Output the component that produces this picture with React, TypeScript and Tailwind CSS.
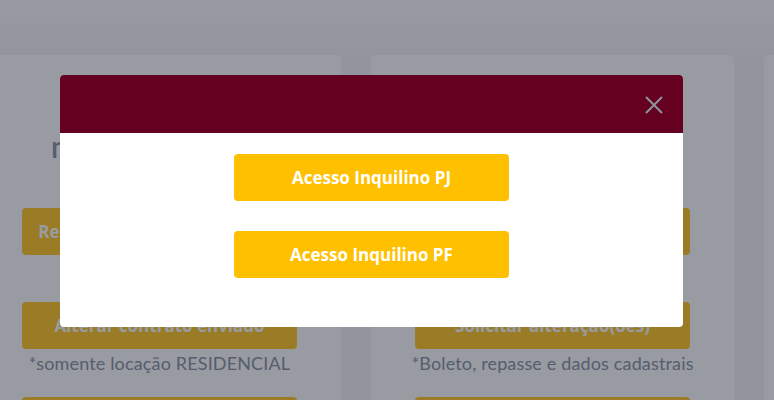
type Card = {
  title: string
  actions: { label: string; note?: string }[]
}

const CARDS: Card[] = [
  {
    title: 'minha locação',
    actions: [
      { label: 'Renovar contrato de locação' },
      { label: 'Alterar contrato enviado', note: '*somente locação RESIDENCIAL' },
      { label: 'Enviar documentos' },
    ],
  },
  {
    title: 'meus dados',
    actions: [
      { label: 'Segunda via de boleto' },
      { label: 'Solicitar alteração(ões)', note: '*Boleto, repasse e dados cadastrais' },
      { label: 'Falar com atendimento' },
    ],
  },
  {
    title: '',
    actions: [],
  },
]

function PageCard({ card }: { card: Card }) {
  return (
    <div className="h-[400px] w-[363px] shrink-0 rounded-md bg-white px-[44px] pt-[73px]">
      <h2 className="h-[36px] whitespace-nowrap pl-[29px] text-[30px] font-semibold leading-[36px] text-[#8f99a6]">
        {card.title}
      </h2>
      <div className="mt-[44px] flex flex-col">
        {card.actions.map((a) => (
          <div key={a.label} className="mb-[47px] flex flex-col items-center">
            <button className="h-[47px] w-[275px] rounded-[4px] bg-[#ffcb2f] font-['Open_Sans',sans-serif] text-[17px] font-bold text-white">
              {a.label}
            </button>
            {a.note && (
              <p className="-mb-[26px] mt-[1px] whitespace-nowrap text-[18px] leading-[26px] tracking-[0.15px] text-[#8f99a6]">
                {a.note}
              </p>
            )}
          </div>
        ))}
      </div>
    </div>
  )
}

export default function App() {
  return (
    <div className="relative h-[400px] w-[774px] overflow-hidden bg-[#f5f6f9] font-['Lato',sans-serif]">
      {/* page behind the modal */}
      <div className="h-[55px] bg-gradient-to-b from-white to-[#f5f6f9]" />
      <div className="-ml-[22px] flex gap-[30px]">
        {CARDS.map((c, i) => (
          <PageCard key={i} card={c} />
        ))}
      </div>

      {/* backdrop */}
      <div className="absolute inset-0 bg-[rgba(0,6,22,0.4)]" />

      {/* modal */}
      <div className="absolute left-[60px] top-[75px] w-[623px] overflow-hidden rounded-[4px] bg-white">
        <div className="flex h-[58px] items-center justify-end bg-[#660020] pr-[20px]">
          <svg width="18" height="18" viewBox="0 0 18 18" className="mt-[1px]">
            <path d="M1 1L17 17M17 1L1 17" stroke="#8c939b" strokeWidth="2" />
          </svg>
        </div>
        <div className="flex flex-col items-center gap-[30px] pb-[49px] pt-[21px]">
          <button className="h-[47px] w-[275px] rounded-[4px] bg-[#ffc000] font-['Open_Sans',sans-serif] text-[17px] font-bold text-white">
            Acesso Inquilino PJ
          </button>
          <button className="h-[47px] w-[275px] rounded-[4px] bg-[#ffc000] font-['Open_Sans',sans-serif] text-[17px] font-bold text-white">
            Acesso Inquilino PF
          </button>
        </div>
      </div>
    </div>
  )
}
